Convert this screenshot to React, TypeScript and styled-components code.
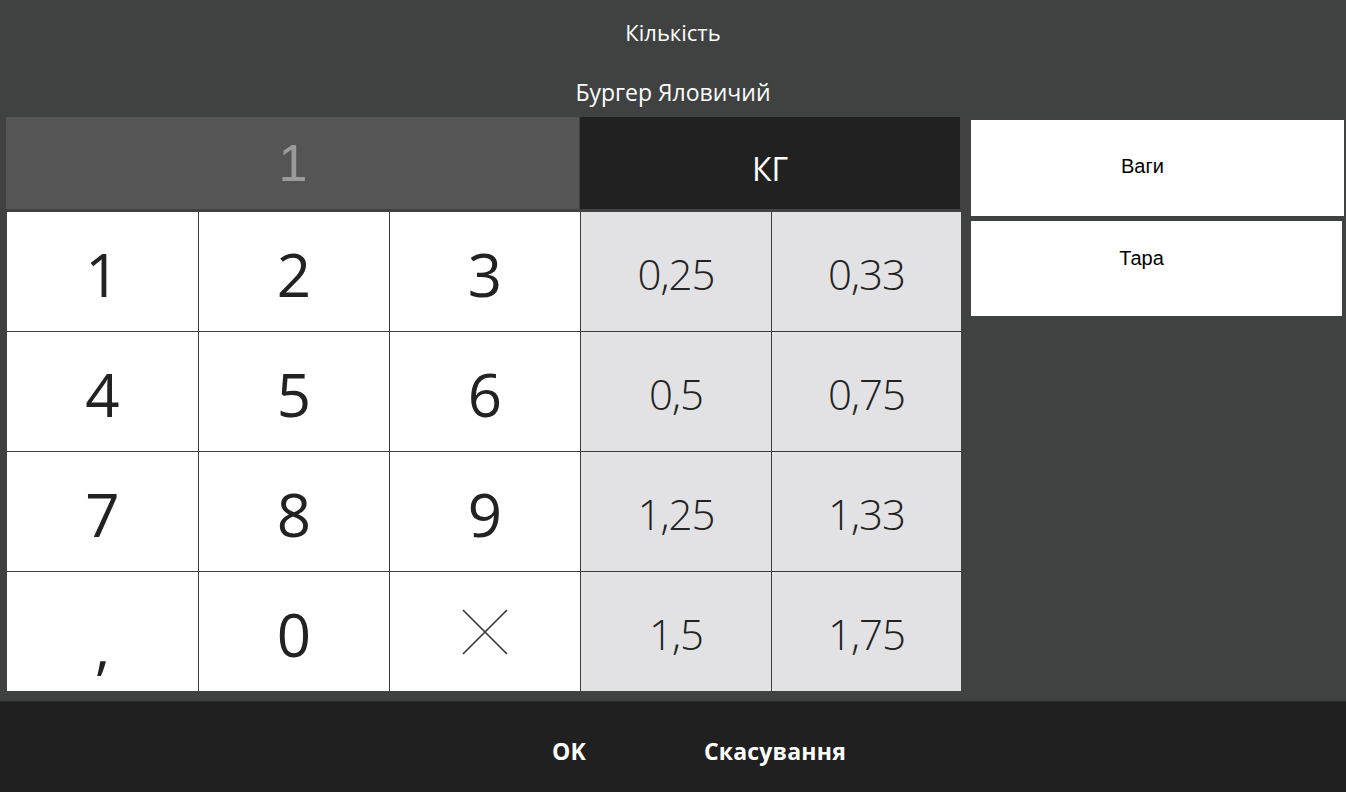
import styled, { createGlobalStyle } from "styled-components";

const GlobalStyle = createGlobalStyle`
  html, body {
    margin: 0;
    padding: 0;
    background: #404241;
  }
  body {
    font-family: "Open Sans", "DejaVu Sans", sans-serif;
  }
`;

const Screen = styled.div`
  display: flex;
  flex-direction: column;
  width: 1346px;
  height: 792px;
  background: #404241;
  overflow: hidden;
`;

const Head = styled.div`
  height: 117px;
  display: flex;
  flex-direction: column;
  align-items: center;
  color: #fff;
`;

const Title = styled.div`
  margin-top: 17px;
  font-size: 22px;
  line-height: 30px;
`;

const ItemName = styled.div`
  margin-top: 30px;
  font-size: 23px;
  line-height: 30px;
`;

const Body = styled.div`
  display: flex;
  padding-left: 7px;
  gap: 10px;
  height: 575px;
`;

const Pad = styled.div`
  width: 954px;
  display: flex;
  flex-direction: column;
  gap: 3px;
`;

const columns = "191px 190px 190px 190px 189px";

const DisplayRow = styled.div`
  display: grid;
  grid-template-columns: ${columns};
  column-gap: 1px;
  height: 92px;
  margin-left: -1px;
`;

const Amount = styled.div`
  grid-column: span 3;
  background: #555555;
  color: #9b9b9b;
  font-family: "Liberation Sans", Arial, sans-serif;
  font-size: 52px;
  display: flex;
  align-items: center;
  justify-content: center;
  padding-left: 1px;
`;

const Unit = styled.div`
  grid-column: span 2;
  background: #212121;
  color: #fff;
  font-size: 32px;
  display: flex;
  align-items: center;
  justify-content: center;
  padding-top: 10px;
  box-sizing: border-box;
`;

const Keys = styled.div`
  display: grid;
  grid-template-columns: ${columns};
  grid-template-rows: repeat(4, 119px);
  gap: 1px;
  background: #3c3c3c;
`;

const Key = styled.div<{ $preset?: boolean; $drop?: number }>`
  background: ${(p) => (p.$preset ? "#e2e1e3" : "#ffffff")};
  color: #222;
  font-size: ${(p) => (p.$preset ? "42px" : "60px")};
  font-weight: ${(p) => (p.$preset ? 300 : 400)};
  letter-spacing: ${(p) => (p.$preset ? "-1px" : "0")};
  display: flex;
  align-items: center;
  justify-content: center;
  padding-top: ${(p) => p.$drop ?? 4}px;
  box-sizing: border-box;
`;

const Side = styled.div`
  width: 373px;
  display: flex;
  flex-direction: column;
  gap: 5px;
  padding-top: 3px;
`;

const SideButton = styled.div<{ $top: number; $h: number; $w: number }>`
  height: ${(p) => p.$h}px;
  width: ${(p) => p.$w}px;
  background: #fff;
  color: #000;
  font-family: "Liberation Sans", Arial, sans-serif;
  font-size: 20px;
  line-height: 24px;
  text-align: center;
  padding-top: ${(p) => p.$top}px;
  padding-right: 30px;
  box-sizing: border-box;
`;

const Foot = styled.div`
  margin-top: 9px;
  height: 91px;
  background: #202020;
  border-top: 1px solid #2a2a2a;
  box-sizing: border-box;
  display: flex;
  justify-content: center;
  align-items: center;
  gap: 118px;
  padding-left: 52px;
  padding-top: 8px;
`;

const FootButton = styled.div`
  color: #fff;
  font-size: 23px;
  font-weight: 700;
  letter-spacing: 0.2px;
`;

const rows = [
  ["1", "2", "3", "0,25", "0,33"],
  ["4", "5", "6", "0,5", "0,75"],
  ["7", "8", "9", "1,25", "1,33"],
  [",", "0", "x", "1,5", "1,75"],
];

function Cross() {
  return (
    <svg width="46" height="46" viewBox="0 0 46 46">
      <path d="M1 1 L45 45 M45 1 L1 45" stroke="#333" strokeWidth="1.6" fill="none" />
    </svg>
  );
}

function dropFor(k: string, preset: boolean) {
  if (k === ",") return 26;
  if (k === "x") return 0;
  return preset ? 4 : 4;
}

export default function App() {
  return (
    <>
      <GlobalStyle />
      <Screen>
        <Head>
          <Title>Кількість</Title>
          <ItemName>Бургер Яловичий</ItemName>
        </Head>
        <Body>
          <Pad>
            <DisplayRow>
              <Amount>1</Amount>
              <Unit>КГ</Unit>
            </DisplayRow>
            <Keys>
              {rows.map((row) =>
                row.map((k, i) => (
                  <Key key={k} $preset={i > 2} $drop={dropFor(k, i > 2)}>
                    {k === "x" ? <Cross /> : k}
                  </Key>
                ))
              )}
            </Keys>
          </Pad>
          <Side>
            <SideButton $top={34} $h={96} $w={373}>Ваги</SideButton>
            <SideButton $top={25} $h={95} $w={371}>Тара</SideButton>
          </Side>
        </Body>
        <Foot>
          <FootButton>OK</FootButton>
          <FootButton>Скасування</FootButton>
        </Foot>
      </Screen>
    </>
  );
}
